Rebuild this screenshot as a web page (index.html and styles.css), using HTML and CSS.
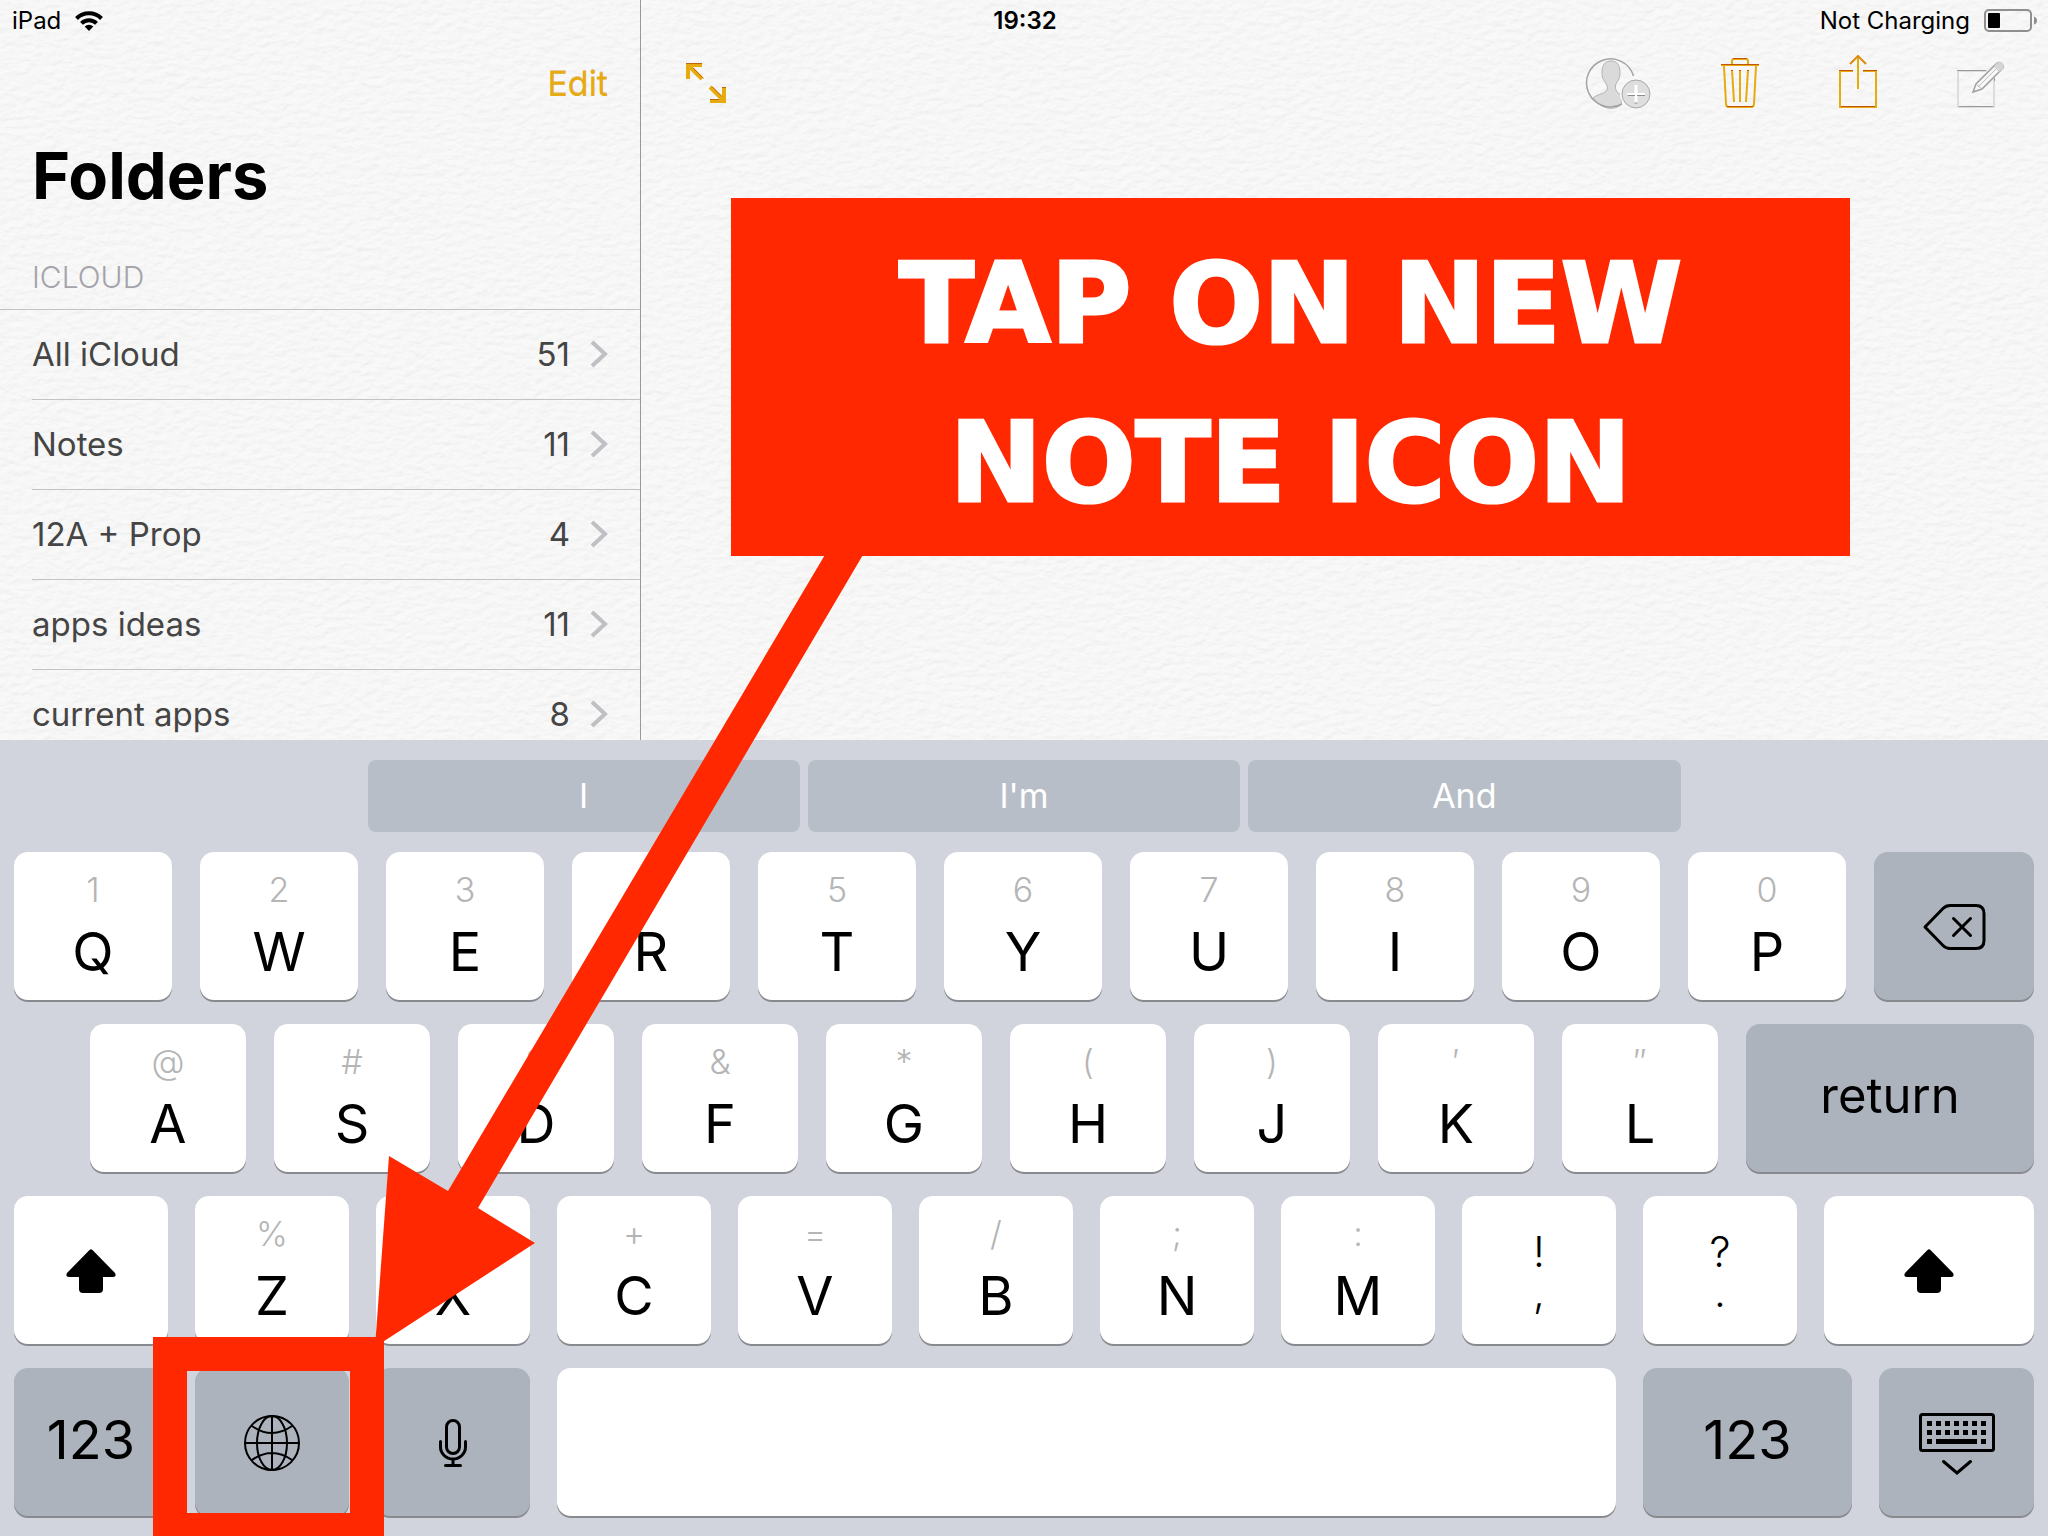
FILE: index.html
```html
<!DOCTYPE html>
<html lang="en">
<head>
<meta charset="utf-8">
<title>Notes</title>
<link rel="stylesheet" href="styles.css">
</head>
<body>
<main class="notes">
  <svg class="paper" aria-hidden="true">
    <filter id="grain" x="0" y="0" width="100%" height="100%" color-interpolation-filters="sRGB">
      <feTurbulence type="fractalNoise" baseFrequency="0.1 0.16" numOctaves="3" seed="8"/>
      <feColorMatrix values="0 0 0 0 0  0 0 0 0 0  0 0 0 0 0  1 0 0 0 0"/>
      <feDiffuseLighting surfaceScale="2" lighting-color="#fff"><feDistantLight azimuth="250" elevation="60"/></feDiffuseLighting>
      <feComponentTransfer>
        <feFuncR type="linear" slope="0.08" intercept="0.9"/>
        <feFuncG type="linear" slope="0.08" intercept="0.9"/>
        <feFuncB type="linear" slope="0.08" intercept="0.899"/>
      </feComponentTransfer>
    </filter>
    <rect width="100%" height="100%" filter="url(#grain)"/>
  </svg>

  <header class="status">
    <div class="status-left">
      <span>iPad</span>
      <svg width="28" height="20" viewBox="0 0 28 20" aria-label="Wi-Fi">
        <g fill="none" stroke="#000" stroke-width="4">
          <path d="M1.500 7.500a17.500 17.500 0 0 1 25 0"/>
          <path d="M6.500 12.300a10.500 10.500 0 0 1 15 0"/>
        </g>
        <path d="M14 20l-4.300-4.500a6 6 0 0 1 8.600 0z"/>
      </svg>
    </div>
    <time class="clock">19:32</time>
    <div class="status-right">
      <span>Not Charging</span>
      <svg width="54" height="24" viewBox="0 0 54 24" aria-label="Battery low">
        <rect x="1" y="1" width="46" height="21" rx="4" fill="none" stroke="#8f8f8f" stroke-width="2"/>
        <rect x="4" y="4" width="12" height="15" rx="1"/>
        <path d="M50 7.500q3 1 3 4t-3 4z" fill="#8f8f8f"/>
      </svg>
    </div>
  </header>

  <nav class="sidebar" aria-label="Folders">
    <div class="sidebar-bar"><button class="edit" type="button">Edit</button></div>
    <h1 class="title">Folders</h1>
    <h2 class="section">ICLOUD</h2>
    <ul class="folders">
      <li><a class="folder" href="#"><span class="name">All iCloud</span><span>51</span><svg class="chevron" viewBox="0 0 18 28"><path d="M2 2l13 12L2 26"/></svg></a></li>
      <li><a class="folder" href="#"><span class="name">Notes</span><span>11</span><svg class="chevron" viewBox="0 0 18 28"><path d="M2 2l13 12L2 26"/></svg></a></li>
      <li><a class="folder" href="#"><span class="name">12A + Prop</span><span>4</span><svg class="chevron" viewBox="0 0 18 28"><path d="M2 2l13 12L2 26"/></svg></a></li>
      <li><a class="folder" href="#"><span class="name">apps ideas</span><span>11</span><svg class="chevron" viewBox="0 0 18 28"><path d="M2 2l13 12L2 26"/></svg></a></li>
      <li><a class="folder" href="#"><span class="name">current apps</span><span>8</span><svg class="chevron" viewBox="0 0 18 28"><path d="M2 2l13 12L2 26"/></svg></a></li>
    </ul>
  </nav>

  <section class="note">
    <div class="toolbar">
      <button class="tool expand" type="button" aria-label="Full screen">
        <svg width="40" height="40" viewBox="0 0 40 40">
          <g fill="none" stroke="#e6ab0f" stroke-width="4"><path d="M16 2H2v14M3 3l13 13"/><path d="M24 38h14V24M37 37L24 24"/></g>
          <path d="M0 .5h16M36 24.500h4M24 36.500h9" stroke="#c4640a" fill="none"/>
          <path d="M7 5l10.500 10.500M26 23.500L36 33.500" stroke="#c4640a" fill="none"/>
        </svg>
      </button>
      <button class="tool wide" type="button" aria-label="Add people" disabled>
        <svg width="68" height="56" viewBox="0 0 68 56">
          <path d="M10 43c4-4 12-4 14-8 1-3 0-5-2-8-2-2-3-5-3-9 0-8 3-12 9-12s9 4 9 12c0 4-1 7-3 9-2 3-2 5-1 8 1 3 4 4 6 6l-1 9c-8 6-20 4-28-7z" fill="#dadada" stroke="#b4b4b4"/>
          <path d="M50.500 21A24 24 0 1 0 39 49" fill="none" stroke="#a3a3a3" stroke-width="1.500"/>
          <circle cx="53" cy="39" r="16" fill="#f8f8f8"/>
          <circle cx="53" cy="39" r="14" fill="#dedede" stroke="#a8a8a8"/>
          <path d="M53 30v18M44 39.500h18" stroke="#fff" stroke-width="3"/>
          <path d="M44.500 40.500H52M54 40.500h8M51.500 48h3" stroke="#8c8c8c"/>
        </svg>
      </button>
      <button class="tool" type="button" aria-label="Delete note">
        <svg width="38" height="56" viewBox="0 0 38 56">
          <g fill="none" stroke="#e6ab0f" stroke-width="2">
            <path d="M11 10V6q0-2 2-2h12q2 0 2 2v4M0 10h38M3 11l2 38q0 3 3 3h22q3 0 3-3l2-38"/>
            <path d="M11 15l2 32M19 15v32M27 15l-2 32"/>
          </g>
          <path d="M12 3.500h14M0 9.500h38M6 51.500h26M10 15.500h2M18 15.500h2M26 15.500h2" stroke="#c4550a"/>
        </svg>
      </button>
      <button class="tool" type="button" aria-label="Share">
        <svg width="38" height="56" viewBox="0 0 38 56">
          <path d="M14 16H1v36h36V16H24M19 34V2" fill="none" stroke="#e6ab0f" stroke-width="2"/>
          <path d="M11 9l8-8 8 8" fill="none" stroke="#dc8a0c" stroke-width="2"/>
          <path d="M0 15.500h14M24 15.500h14M2 51.500h34" stroke="#c4550a"/>
        </svg>
      </button>
      <button class="tool" type="button" aria-label="New note" disabled>
        <svg width="58" height="56" viewBox="-10 0 58 56">
          <path d="M30 16H1v36h36V24" fill="none" stroke="#dcdcdc" stroke-width="2"/>
          <path d="M0 15.500h29M2 51.500h34M37.500 23v3" stroke="#999"/>
          <path d="M16 37l3-8L39 9q3-3 6 0t0 5L25 34z" fill="#f7f7f7" stroke="#a0a0a0" stroke-width="1.500"/>
          <path d="M19 29l6 5M37 11l6 6M21 32L41 12" stroke="#bdbdbd" fill="none"/>
          <path d="M37.500 10.500L40 8q3-2 5.500.5t.5 5l-2.500 2.500z" fill="#d4d4d4"/>
        </svg>
      </button>
    </div>
  </section>
</main>

<section class="keyboard" aria-label="Keyboard">
  <div class="predictions">
    <button type="button" class="prediction">I</button>
    <button type="button" class="prediction">I'm</button>
    <button type="button" class="prediction">And</button>
  </div>
  <div class="row row-top">
    <button type="button" class="key"><small>1</small>Q</button>
    <button type="button" class="key"><small>2</small>W</button>
    <button type="button" class="key"><small>3</small>E</button>
    <button type="button" class="key"><small>4</small>R</button>
    <button type="button" class="key"><small>5</small>T</button>
    <button type="button" class="key"><small>6</small>Y</button>
    <button type="button" class="key"><small>7</small>U</button>
    <button type="button" class="key"><small>8</small>I</button>
    <button type="button" class="key"><small>9</small>O</button>
    <button type="button" class="key"><small>0</small>P</button>
    <button type="button" class="key special icon" aria-label="Delete">
      <svg width="64" height="48" viewBox="0 0 64 48" fill="none" stroke="#000" stroke-width="3" stroke-linecap="round" stroke-linejoin="round">
        <path d="M3 24L21 5.500Q24 2.500 28 2.500h26q8 0 8 8v27q0 8-8 8H28q-4 0-7-3z"/>
        <path d="M31.500 15.500l17 17M48.500 15.500l-17 17"/>
      </svg>
    </button>
  </div>
  <div class="row row-home">
    <button type="button" class="key"><small>@</small>A</button>
    <button type="button" class="key"><small>#</small>S</button>
    <button type="button" class="key"><small>$</small>D</button>
    <button type="button" class="key"><small>&amp;</small>F</button>
    <button type="button" class="key"><small>*</small>G</button>
    <button type="button" class="key"><small>(</small>H</button>
    <button type="button" class="key"><small>)</small>J</button>
    <button type="button" class="key"><small>′</small>K</button>
    <button type="button" class="key"><small>″</small>L</button>
    <button type="button" class="key special return">return</button>
  </div>
  <div class="row row-lower">
    <button type="button" class="key icon" aria-label="Shift">
      <svg width="50" height="44" viewBox="0 0 50 44"><path d="M23.500 1q1.500-1.500 3 0L49 24q2 4-2 4H37v12q0 4-4 4H17q-4 0-4-4V28H3q-4 0-2-4z"/></svg>
    </button>
    <button type="button" class="key"><small>%</small>Z</button>
    <button type="button" class="key"><small>-</small>X</button>
    <button type="button" class="key"><small>+</small>C</button>
    <button type="button" class="key"><small>=</small>V</button>
    <button type="button" class="key"><small>/</small>B</button>
    <button type="button" class="key"><small>;</small>N</button>
    <button type="button" class="key"><small>:</small>M</button>
    <button type="button" class="key pair"><span>!</span><span>,</span></button>
    <button type="button" class="key pair"><span>?</span><span>.</span></button>
    <button type="button" class="key icon" aria-label="Shift">
      <svg width="50" height="44" viewBox="0 0 50 44"><path d="M23.500 1q1.500-1.500 3 0L49 24q2 4-2 4H37v12q0 4-4 4H17q-4 0-4-4V28H3q-4 0-2-4z"/></svg>
    </button>
  </div>
  <div class="row row-space">
    <button type="button" class="key special">123</button>
    <button type="button" class="key special icon" aria-label="Next keyboard">
      <svg width="56" height="56" viewBox="0 0 56 56" fill="none" stroke="#000" stroke-width="2">
        <circle cx="28" cy="28" r="27"/><ellipse cx="28" cy="28" rx="15" ry="27"/>
        <path d="M28 1v54M1 28h54M8 11q20 14 40 0M8 45q20-14 40 0"/>
      </svg>
    </button>
    <button type="button" class="key special icon" aria-label="Dictate">
      <svg width="28" height="48" viewBox="0 0 28 48" fill="none" stroke="#000" stroke-width="3" stroke-linecap="round">
        <rect x="7.500" y="1.500" width="13" height="33" rx="6.500"/>
        <path d="M1.500 22.500V28a12.500 12 0 0 0 25 0v-5.500M14 40v6M6.500 46.500h15"/>
      </svg>
    </button>
    <button type="button" class="key" aria-label="Space"></button>
    <button type="button" class="key special">123</button>
    <button type="button" class="key special icon" aria-label="Hide keyboard">
      <svg width="76" height="64" viewBox="0 -2 76 64" fill="none" stroke="#000">
        <rect x="1.500" y="1.500" width="73" height="36" rx="2" stroke-width="3"/>
        <path d="M8 10.500h60M8 19.500h60" stroke-width="5" stroke-dasharray="5 4"/>
        <path d="M8 28.500h5M17 28.500h41M62 28.500h5" stroke-width="5"/>
        <path d="M24.500 48.500L38 60l13.500-11.500" stroke-width="3" stroke-linecap="round"/>
      </svg>
    </button>
  </div>
</section>

<div class="callout" role="note">
  <svg class="arrow" viewBox="0 0 2048 1536" preserveAspectRatio="none" aria-hidden="true">
    <path d="M829 548L448 1191l-59-35-14 191 160-104-57-35L867 548z"/>
    <path d="M153 1337h231v210H153zM187 1371v142h163v-142z" fill-rule="evenodd"/>
  </svg>
  <p class="banner">TAP ON NEW<br>NOTE ICON</p>
</div>
</body>
</html>
```
FILE: styles.css
```css
* { box-sizing: border-box; }

body {
  margin: 0;
  height: 100vh;
  display: flex;
  flex-direction: column;
  position: relative;
  overflow: hidden;
  font-family: Inter, "Liberation Sans", sans-serif;
  color: #000;
}

button {
  border: 0;
  padding: 0;
  background: none;
  font: inherit;
  color: inherit;
}

svg { display: block; }

/* Notes app */
.notes {
  flex: 1;
  min-height: 0;
  display: grid;
  grid-template-columns: 641px 1fr;
  grid-template-rows: 40px 1fr;
  position: relative;
  overflow: hidden;
  background: #f7f7f7;
}

.paper {
  position: absolute;
  inset: 0;
  width: 100%;
  height: 100%;
}

.status {
  grid-area: 1 / 1 / 2 / 3;
  display: grid;
  grid-template-columns: 1fr auto 1fr;
  align-items: center;
  padding: 2px 10px 0 12px;
  font-size: 24px;
  line-height: 38px;
  z-index: 1;
}

.status-left,
.status-right {
  display: flex;
  align-items: center;
  gap: 14px;
}

.status-right { justify-content: flex-end; }

.clock { font-weight: 600; }

.sidebar {
  grid-area: 1 / 1 / 3 / 2;
  padding: 40px 0 0 32px;
  border-right: 1px solid #999;
  position: relative;
}

.sidebar-bar {
  height: 86px;
  padding-right: 32px;
  display: flex;
  align-items: center;
  justify-content: flex-end;
}

.edit {
  font-size: 34px;
  color: #e6ab0f;
  text-shadow: 0 -1px 0 #d0780c66;
}

.title {
  margin: 10px 0 41px;
  font-size: 65px;
  line-height: 80px;
  font-weight: 700;
}

.section {
  margin: 0 0 0 -32px;
  padding: 0 0 12px 32px;
  border-bottom: 1px solid #c3c3c5;
  font-size: 30px;
  line-height: 40px;
  font-weight: 300;
  color: #a4a4aa;
}

.folders {
  margin: 0;
  padding: 0;
  list-style: none;
}

.folder {
  height: 90px;
  padding: 0 32px 2px 0;
  display: flex;
  align-items: center;
  border-bottom: 1px solid #c3c3c5;
  font-size: 33px;
  line-height: 40px;
  color: #454545;
  text-decoration: none;
}

.name { flex: 1; }

.chevron {
  width: 18px;
  height: 28px;
  margin-left: 20px;
  fill: none;
  stroke: #bfbfc4;
  stroke-width: 4;
}

.note {
  grid-area: 2 / 2 / 3 / 3;
  position: relative;
}

.toolbar {
  height: 86px;
  padding: 0 43px 0 45px;
  display: flex;
  align-items: center;
  gap: 60px;
}

.tool {
  width: 58px;
  display: flex;
  justify-content: center;
}

.expand {
  width: 40px;
  margin-right: auto;
}

.wide { width: 68px; }

/* Keyboard */
.keyboard {
  padding: 20px 14px;
  background: #d1d4dc;
}

.predictions {
  width: 65%;
  margin: 0 auto 20px;
  display: grid;
  grid-template-columns: repeat(3, 1fr);
  gap: 8px;
}

.prediction {
  height: 72px;
  padding-bottom: 2px;
  border-radius: 8px;
  background: #b7bec7;
  color: #fff;
  font-size: 34px;
}

.row {
  display: grid;
  gap: 28px;
  margin-top: 24px;
}

.row-top {
  grid-template-columns: repeat(10, 158fr) 160fr;
  margin-top: 0;
}

.row-home {
  grid-template-columns: repeat(9, 156fr) 288fr;
  padding-left: 76px;
}

.row-lower,
.row-space { gap: 27px; }

.row-lower { grid-template-columns: repeat(10, 154fr) 210fr; }

.row-space { grid-template-columns: 154fr 154fr 154fr 1059fr 209fr 155fr; }

.key {
  height: 148px;
  padding-top: 18px;
  display: flex;
  flex-direction: column;
  align-items: center;
  gap: 12px;
  border-radius: 14px;
  background: #fff;
  box-shadow: 0 2px 0 #888a8d;
  font-size: 54px;
  line-height: 60px;
}

.key small {
  font-size: 34px;
  line-height: 40px;
  font-weight: 300;
  color: #b5b5b5;
}

.special {
  padding: 0 0 4px;
  justify-content: center;
  background: #acb3bc;
}

.icon {
  padding: 2px 0 0;
  justify-content: center;
}

.return { font-size: 49px; }

.pair {
  padding-top: 36px;
  gap: 0;
  font-size: 42px;
  line-height: 40px;
  font-weight: 300;
}

/* Tutorial markup drawn over the screen */
.callout {
  position: absolute;
  inset: 0;
  pointer-events: none;
}

.arrow {
  width: 100%;
  height: 100%;
  fill: #ff2800;
}

.banner {
  position: absolute;
  top: 198px;
  left: 731px;
  right: 198px;
  margin: 0;
  padding: 27px 0 13px;
  background: #ff2800;
  color: #fff;
  font-family: "DejaVu Sans", sans-serif;
  font-size: 110px;
  line-height: 159px;
  font-weight: 700;
  -webkit-text-stroke: 3px #fff;
  text-align: center;
}
```
